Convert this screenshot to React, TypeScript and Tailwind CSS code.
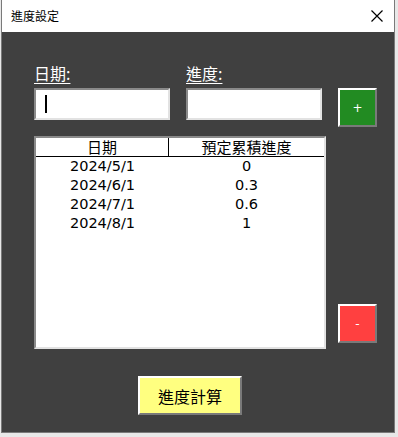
import React from "react";

const cjk = { fontFamily: '"Noto Sans CJK TC", "Noto Sans CJK JP", sans-serif' };
const num = { fontFamily: '"DejaVu Sans", "Liberation Sans", sans-serif' };

const rows = [
  ["2024/5/1", "0"],
  ["2024/6/1", "0.3"],
  ["2024/7/1", "0.6"],
  ["2024/8/1", "1"],
];

export default function App() {
  return (
    <div className="w-[398px] h-[437px] bg-[#e8e8e8] overflow-hidden">
      <div className="ml-[1px] w-[394px] h-[433px] flex flex-col bg-[#404040] border border-[#7a7a7a] border-t-0">
        {/* Title bar */}
        <div className="h-[32px] bg-white flex items-center pl-[9px] pr-[10px] shrink-0">
          <span className="text-[12px] text-black leading-none" style={cjk}>進度設定</span>
          <svg className="ml-auto" width="14" height="14" viewBox="0 0 14 14">
            <path d="M1.5 1.5 L12.5 12.5 M12.5 1.5 L1.5 12.5" stroke="#000" strokeWidth="1.2" />
          </svg>
        </div>
        {/* Body */}
        <div className="flex pl-[32px] pt-[31px]">
          <div className="w-[292px] flex flex-col">
            <div className="flex gap-[16px]">
              <div className="w-[136px] flex flex-col">
                <span className="text-[16px] leading-[20px] text-white underline underline-offset-[3px]" style={cjk}>日期:</span>
                <div className="mt-[5px] h-[32px] bg-white border-2 border-t-[#8a8a8a] border-l-[#8a8a8a] border-b-[#e2e2e2] border-r-[#e2e2e2] flex items-center pl-[9px]">
                  <div className="w-[1.5px] h-[18px] bg-black" />
                </div>
              </div>
              <div className="w-[136px] flex flex-col">
                <span className="text-[16px] leading-[20px] text-white underline underline-offset-[3px]" style={cjk}>進度:</span>
                <div className="mt-[5px] h-[32px] bg-white border-2 border-t-[#8a8a8a] border-l-[#8a8a8a] border-b-[#e2e2e2] border-r-[#e2e2e2]" />
              </div>
            </div>
            <div className="mt-[16px] h-[213px] bg-white border-2 border-t-[#8a8a8a] border-l-[#8a8a8a] border-b-[#e2e2e2] border-r-[#e2e2e2] flex flex-col">
              <div className="flex h-[19px] border-b border-black text-[15px] leading-[18px] text-black" style={cjk}>
                <div className="w-[133px] border-r border-black text-center">日期</div>
                <div className="flex-1 text-center">預定累積進度</div>
              </div>
              {rows.map(([d, v]) => (
                <div key={d} className="flex h-[19px] items-center text-[14.5px] text-black" style={num}>
                  <div className="w-[133px] text-center">{d}</div>
                  <div className="flex-1 text-center">{v}</div>
                </div>
              ))}
            </div>
          </div>
          <div className="ml-[12px] flex flex-col">
            <div className="mt-[25px] w-[39px] h-[39px] bg-[#228b22] border-2 border-t-white border-l-white border-b-[#7a7a7a] border-r-[#7a7a7a] flex items-center justify-center text-white text-[12px]" style={num}>
              +
            </div>
            <div className="mt-[177px] w-[39px] h-[39px] bg-[#ff4040] border-2 border-t-white border-l-white border-b-[#7a7a7a] border-r-[#7a7a7a] flex items-center justify-center text-white text-[12px]" style={num}>
              -
            </div>
          </div>
        </div>
        <div className="flex mt-[27px] pl-[136px]">
          <div className="w-[104px] h-[39px] bg-[#ffff80] border-2 border-t-white border-l-white border-b-[#7a7a7a] border-r-[#7a7a7a] flex items-center justify-center text-[16px] text-black" style={cjk}>
            進度計算
          </div>
        </div>
      </div>
    </div>
  );
}
